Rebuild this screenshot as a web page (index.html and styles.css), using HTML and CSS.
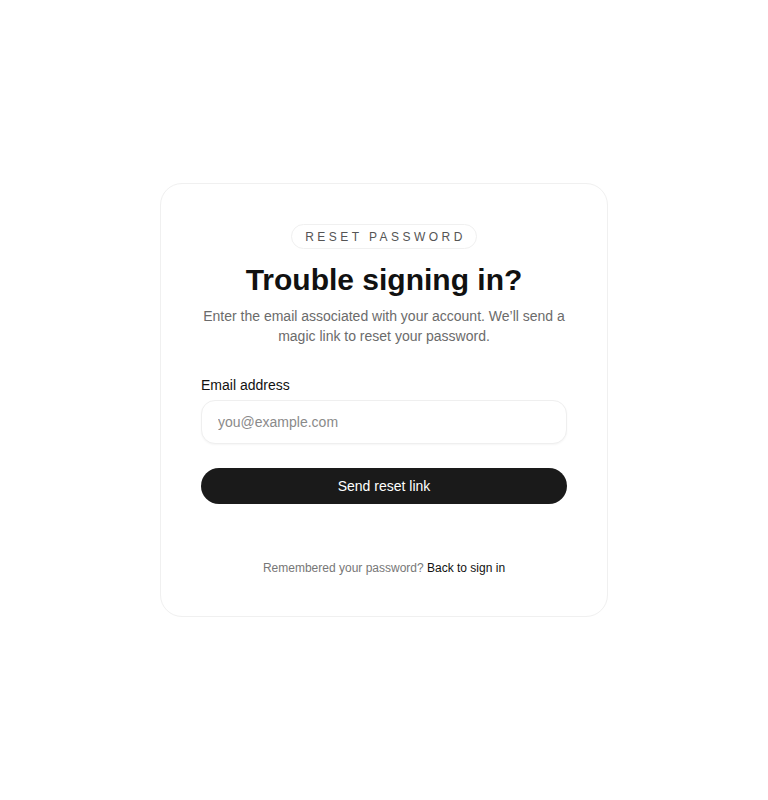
FILE: index.html
```html
<!DOCTYPE html>
<html lang="en">
<head>
<meta charset="utf-8">
<title>Reset password</title>
<link rel="stylesheet" href="styles.css">
</head>
<body>
<main class="page">
  <section class="card">
    <div class="badge-row"><span class="badge">RESET PASSWORD</span></div>
    <h1 class="title">Trouble signing in?</h1>
    <p class="lead">Enter the email associated with your account. We’ll send a magic link to reset your password.</p>
    <form class="form">
      <label class="label" for="email">Email address</label>
      <input class="input" id="email" type="email" placeholder="you@example.com">
      <button class="button" type="button">Send reset link</button>
    </form>
    <p class="footer">Remembered your password? <a class="link" href="#">Back to sign in</a></p>
  </section>
</main>
</body>
</html>
```
FILE: styles.css
```css
* { box-sizing: border-box; }
html, body { margin: 0; padding: 0; background: #ffffff; }
body { font-family: "Liberation Sans", Arial, sans-serif; color: #111; }
.page {
  min-height: 800px;
  display: flex;
  align-items: center;
  justify-content: center;
}
.card {
  width: 448px;
  border: 1px solid #f0f0f0;
  border-radius: 22px;
  padding: 40px;
  background: #fff;
  display: flex;
  flex-direction: column;
}
.badge-row { display: flex; justify-content: center; }
.badge {
  display: inline-block;
  height: 25px;
  line-height: 25px;
  padding: 0 10px 0 13px;
  border: 1px solid #f0f0f0;
  border-radius: 13px;
  font-size: 12px;
  letter-spacing: 3.45px;
  color: #555;
}
.title {
  margin: 13px 0 0;
  font-size: 30px;
  line-height: 36px;
  font-weight: 700;
  text-align: center;
  color: #111;
}
.lead {
  margin: 8px 0 0;
  font-size: 14px;
  line-height: 20px;
  text-align: center;
  color: #6b6b6b;
}
.form { display: flex; flex-direction: column; margin-top: 29px; }
.label { font-size: 14px; line-height: 20px; color: #111; }
.input {
  margin-top: 5px;
  height: 44px;
  border: 1px solid #efefef;
  border-radius: 14px;
  padding: 0 16px;
  font-family: inherit;
  font-size: 14px;
  color: #111;
  background: #fff;
  box-shadow: 0 1px 2px rgba(0,0,0,0.04);
  outline: none;
}
.input::placeholder { color: #8a8a8a; }
.button {
  margin-top: 24px;
  height: 36px;
  border: 0;
  border-radius: 18px;
  background: #1a1a1a;
  color: #fff;
  font-family: inherit;
  font-size: 14px;
}
.footer {
  margin: 56px 0 0;
  font-size: 12px;
  line-height: 16px;
  text-align: center;
  color: #777;
}
.link { color: #111; text-decoration: none; }
```
